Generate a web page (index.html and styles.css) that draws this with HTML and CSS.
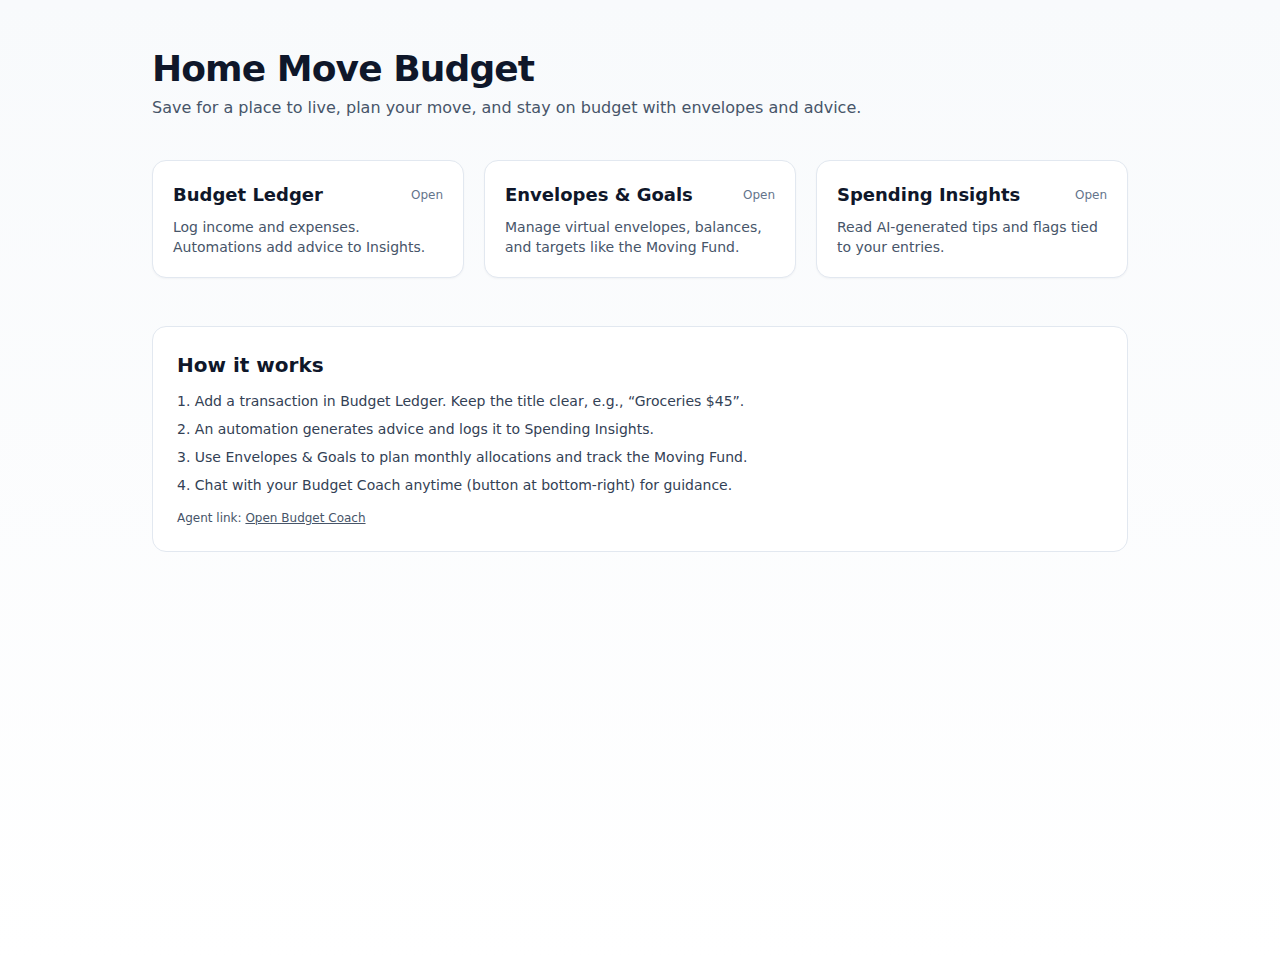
FILE: index.html
```html
<!DOCTYPE html>
<html lang="en">
<head>
<meta charset="utf-8">
<title>Home Move Budget</title>
<link rel="stylesheet" href="styles.css">
</head>
<body>
<main class="page">
  <header class="hero">
    <h1 class="hero-title">Home Move Budget</h1>
    <p class="hero-sub">Save for a place to live, plan your move, and stay on budget with envelopes and advice.</p>
  </header>

  <section class="cards">
    <a class="card" href="#">
      <div class="card-head">
        <h2 class="card-title">Budget Ledger</h2>
        <span class="card-open">Open</span>
      </div>
      <p class="card-desc">Log income and expenses. Automations add advice to Insights.</p>
    </a>
    <a class="card" href="#">
      <div class="card-head">
        <h2 class="card-title">Envelopes &amp; Goals</h2>
        <span class="card-open">Open</span>
      </div>
      <p class="card-desc">Manage virtual envelopes, balances, and targets like the Moving Fund.</p>
    </a>
    <a class="card" href="#">
      <div class="card-head">
        <h2 class="card-title">Spending Insights</h2>
        <span class="card-open">Open</span>
      </div>
      <p class="card-desc">Read AI-generated tips and flags tied to your entries.</p>
    </a>
  </section>

  <section class="how">
    <h2 class="how-title">How it works</h2>
    <ol class="how-list">
      <li>1. Add a transaction in Budget Ledger. Keep the title clear, e.g., “Groceries $45”.</li>
      <li>2. An automation generates advice and logs it to Spending Insights.</li>
      <li>3. Use Envelopes &amp; Goals to plan monthly allocations and track the Moving Fund.</li>
      <li>4. Chat with your Budget Coach anytime (button at bottom-right) for guidance.</li>
    </ol>
    <p class="agent">Agent link: <a class="agent-link" href="#">Open Budget Coach</a></p>
  </section>
</main>
</body>
</html>
```

FILE: styles.css
```css
* { box-sizing: border-box; }

html, body {
  margin: 0;
  padding: 0;
}

body {
  min-height: 960px;
  font-family: "DejaVu Sans", "Liberation Sans", sans-serif;
  color: #0f172a;
  background: linear-gradient(180deg, #f8fafc 0%, #ffffff 100%);
}

.page {
  width: 976px;
  margin: 0 auto;
  padding-top: 48px;
}

.hero-title {
  margin: 0;
  font-size: 36px;
  line-height: 41px;
  font-weight: 700;
  letter-spacing: -0.025em;
  color: #0f172a;
}

.hero-sub {
  margin: 7px 0 0;
  font-size: 16px;
  line-height: 24px;
  color: #475569;
}

.cards {
  display: grid;
  grid-template-columns: repeat(3, 1fr);
  gap: 20px;
  margin-top: 40px;
}

.card {
  display: block;
  height: 118px;
  padding: 20px;
  background: #ffffff;
  border: 1px solid #e2e8f0;
  border-radius: 14px;
  box-shadow: 0 1px 2px rgba(15, 23, 42, 0.04);
  text-decoration: none;
  color: inherit;
}

.card-head {
  display: flex;
  justify-content: space-between;
  align-items: center;
}

.card-title {
  margin: 0;
  font-size: 18px;
  line-height: 27px;
  font-weight: 700;
  color: #0f172a;
}

.card-open {
  font-size: 12px;
  color: #64748b;
}

.card-desc {
  margin: 9px 0 0;
  font-size: 14px;
  line-height: 20px;
  color: #475569;
}

.how {
  margin-top: 48px;
  padding: 24px;
  background: rgba(255, 255, 255, 0.85);
  border: 1px solid #e2e8f0;
  border-radius: 14px;
}

.how-title {
  margin: 0;
  font-size: 20px;
  line-height: 28px;
  font-weight: 700;
  color: #0f172a;
}

.how-list {
  list-style: none;
  margin: 12px 0 0;
  padding: 0;
  display: flex;
  flex-direction: column;
  gap: 8px;
}

.how-list li {
  font-size: 14px;
  line-height: 20px;
  color: #334155;
}

.agent {
  margin: 15px 0 0;
  font-size: 12px;
  line-height: 17px;
  color: #475569;
}

.agent-link {
  color: #475569;
  text-decoration: underline;
}
```
